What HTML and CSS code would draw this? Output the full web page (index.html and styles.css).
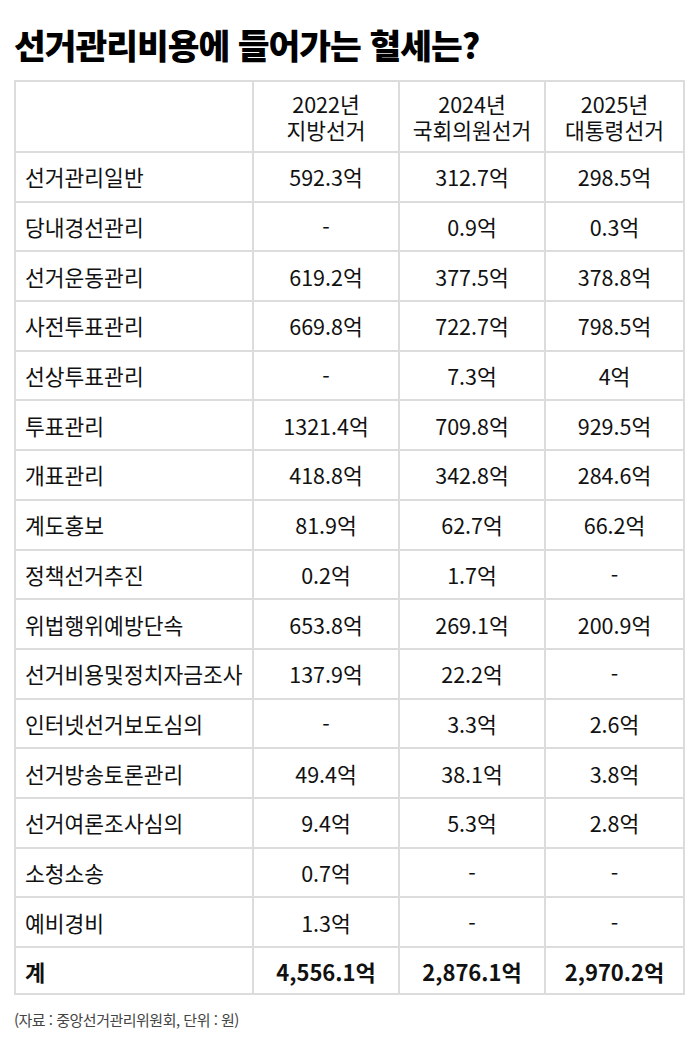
FILE: index.html
```html
<!DOCTYPE html>
<html lang="ko">
<head>
<meta charset="utf-8">
<link rel="stylesheet" href="styles.css">
</head>
<body>
<div class="page">
  <h1 class="title">선거관리비용에 들어가는 혈세는?</h1>
  <table class="cost">
    <colgroup>
      <col class="c-label"><col class="c-a"><col class="c-b"><col class="c-c">
    </colgroup>
    <thead>
      <tr class="head">
        <th></th>
        <th><span class="hl">2022년</span><span class="hl">지방선거</span></th>
        <th><span class="hl">2024년</span><span class="hl">국회의원선거</span></th>
        <th><span class="hl">2025년</span><span class="hl">대통령선거</span></th>
      </tr>
    </thead>
    <tbody>
      <tr><td>선거관리일반</td><td>592.3억</td><td>312.7억</td><td>298.5억</td></tr>
      <tr><td>당내경선관리</td><td>-</td><td>0.9억</td><td>0.3억</td></tr>
      <tr><td>선거운동관리</td><td>619.2억</td><td>377.5억</td><td>378.8억</td></tr>
      <tr><td>사전투표관리</td><td>669.8억</td><td>722.7억</td><td>798.5억</td></tr>
      <tr><td>선상투표관리</td><td>-</td><td>7.3억</td><td>4억</td></tr>
      <tr><td>투표관리</td><td>1321.4억</td><td>709.8억</td><td>929.5억</td></tr>
      <tr><td>개표관리</td><td>418.8억</td><td>342.8억</td><td>284.6억</td></tr>
      <tr><td>계도홍보</td><td>81.9억</td><td>62.7억</td><td>66.2억</td></tr>
      <tr><td>정책선거추진</td><td>0.2억</td><td>1.7억</td><td>-</td></tr>
      <tr><td>위법행위예방단속</td><td>653.8억</td><td>269.1억</td><td>200.9억</td></tr>
      <tr><td>선거비용및정치자금조사</td><td>137.9억</td><td>22.2억</td><td>-</td></tr>
      <tr><td>인터넷선거보도심의</td><td>-</td><td>3.3억</td><td>2.6억</td></tr>
      <tr><td>선거방송토론관리</td><td>49.4억</td><td>38.1억</td><td>3.8억</td></tr>
      <tr><td>선거여론조사심의</td><td>9.4억</td><td>5.3억</td><td>2.8억</td></tr>
      <tr><td>소청소송</td><td>0.7억</td><td>-</td><td>-</td></tr>
      <tr><td>예비경비</td><td>1.3억</td><td>-</td><td>-</td></tr>
      <tr class="total"><td>계</td><td>4,556.1억</td><td>2,876.1억</td><td>2,970.2억</td></tr>
    </tbody>
  </table>
  <p class="source">(자료 : 중앙선거관리위원회, 단위 : 원)</p>
</div>
</body>
</html>
```

FILE: styles.css
```css
html, body {
  margin: 0;
  padding: 0;
  background: #ffffff;
}

.page {
  width: 700px;
  padding: 22px 0 0 14px;
  box-sizing: border-box;
  font-family: "Noto Sans CJK KR", "Noto Sans", sans-serif;
  color: #111111;
}

.title {
  margin: 0;
  font-size: 34.5px;
  font-weight: 900;
  letter-spacing: -1px;
  line-height: 44px;
  color: #000000;
}

.cost {
  margin-top: 14px;
  width: 669px;
  border-collapse: collapse;
  table-layout: fixed;
  font-size: 21.5px;
}

.c-label { width: 238px; }
.c-a { width: 146px; }
.c-b { width: 146px; }
.c-c { width: 139px; }

.cost th,
.cost td {
  border: 2px solid #dcdcdc;
  padding: 0;
  text-align: center;
  vertical-align: middle;
  font-weight: 400;
  height: 47.7px;
  white-space: nowrap;
}

.cost td:first-child {
  text-align: left;
  padding-left: 9px;
}

.head th {
  height: 69px;
}

.hl {
  display: block;
  line-height: 26px;
  height: 26px;
}

.total td {
  font-weight: 700;
  height: 45px;
  font-size: 22px;
}

.source {
  margin: 14px 0 0 0;
  font-size: 15px;
  color: #444444;
  letter-spacing: -0.5px;
}
```
